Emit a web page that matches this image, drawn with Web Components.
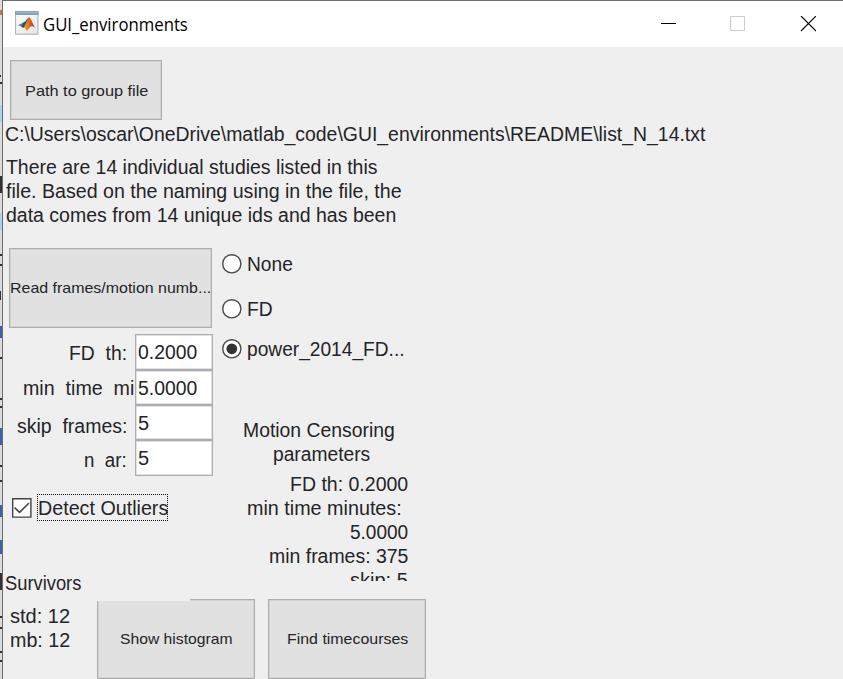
<!DOCTYPE html>
<html lang="en">
<head>
<meta charset="utf-8">
<title>GUI_environments</title>
<style>
html,body{margin:0;height:679px;overflow:hidden;background:#efefef}
</style>
</head>
<body>
<gui-window></gui-window>

<template id="window-template">
<style>
:host{display:flex;width:843px;height:679px;overflow:hidden;font:20px/24px "Liberation Sans",Arial,sans-serif;color:#242428}
.edge{flex:none;width:2px;height:679px}
.window{flex:none;box-sizing:border-box;width:841px;height:679px;border-left:1px solid #6b6b6b;border-top:1px solid #6b6b6b;background:#efefef;display:flex;flex-direction:column;align-items:flex-start}
.mid{display:flex;margin-top:21px;height:233px}
.left{width:210px}
.right{width:217px;padding-top:4px;box-sizing:border-box}
.low{display:flex;height:105px}
.lowleft{width:240px;height:105px}
.desc{height:72px;margin:9px 0 0 3px}
.end{display:flex;flex-direction:column;align-items:flex-end;width:165px}
.clip{height:109px;overflow:hidden}
.foot{display:flex}
.stats{width:94px;padding:5px 0 0 7px;box-sizing:border-box}
</style>
<svg class="edge" viewBox="0 0 2 679">
<path fill="#dcdcdc" d="M0 0h2v679H0z"/>
<path fill="#a8d5e8" d="M0 105h2v17H0zM0 213h2v17H0z"/>
<path fill="#333" d="M0 75h1v2H0zM0 82h2v2H0zM0 176h2v17H0zM0 254h2v2H0zM0 264h2v2H0zM0 291h1v9H0zM0 357h2v2H0zM0 398h2v2H0zM0 406h2v2H0zM0 465h2v2H0zM0 480h2v2H0zM0 573h2v17H0zM0 616h2v2H0zM0 627h2v2H0zM0 651h2v2H0zM0 660h2v2H0z"/>
<path fill="#3c62a8" d="M0 326h2v12H0zM0 428h2v17H0zM0 505h2v12H0zM0 540h2v14H0z"/>
<path fill="#bb795b" d="M0 10h2v5H0z"/>
</svg>
<div class="window">
<title-bar></title-bar>
<push-button style="width:152px;height:60px;margin:13px 0 0 7px;--dy:2px"><fit-text w="123">Path to group file</fit-text></push-button>
<fit-text w="700" style="margin:2px 0 0 2px">C:\Users\oscar\OneDrive\matlab_code\GUI_environments\README\list_N_14.txt</fit-text>
<div class="desc">
<fit-text w="371">There are 14 individual studies listed in this</fit-text>
<fit-text w="396">file. Based on the naming using in the file, the</fit-text>
<fit-text w="390">data comes from 14 unique ids and has been</fit-text>
</div>
<div class="mid">
<div class="left">
<push-button style="width:203px;height:80px;margin-left:6px"><fit-text w="201">Read frames/motion numb...</fit-text></push-button>
<edit-row style="margin-top:6px;--ly:7px;--vy:6px;--end:8px"><fit-text slot="label" w="58">FD  th:</fit-text><fit-text w="59">0.2000</fit-text></edit-row>
<edit-row style="--h:35px;--ly:6px;--vy:6px;--end:1px"><fit-text slot="label" w="111">min  time  mi</fit-text><fit-text w="59">5.0000</fit-text></edit-row>
<edit-row style="--h:35px;--ly:9px;--vy:6px;--end:8px"><fit-text slot="label" w="110">skip  frames:</fit-text><fit-text w="11">5</fit-text></edit-row>
<edit-row style="--ly:8px;--vy:6px;--end:8px"><fit-text slot="label" w="43">n  ar:</fit-text><fit-text w="11">5</fit-text></edit-row>
</div>
<div class="right">
<radio-item><fit-text w="46">None</fit-text></radio-item>
<radio-item style="margin-top:21px"><fit-text w="26">FD</fit-text></radio-item>
<radio-item checked style="margin-top:16px"><fit-text w="158">power_2014_FD...</fit-text></radio-item>
<div style="display:flex;flex-direction:column;align-items:center;width:150px;margin:57px 0 0 31px">
<fit-text w="152">Motion Censoring</fit-text><fit-text w="97" style="margin-left:5px">parameters</fit-text>
</div>
</div>
</div>
<div class="low" style="margin-top:-9px">
<div class="lowleft">
<check-item style="margin:22px 0 0 9px"><fit-text w="130">Detect Outliers</fit-text></check-item>
<fit-text w="76" style="margin:50px 0 0 2px">Survivors</fit-text>
</div>
<div class="end clip">
<fit-text w="118">FD th: 0.2000</fit-text>
<fit-text w="155" style="margin-right:6px">min time minutes:</fit-text>
<fit-text w="58">5.0000</fit-text>
<fit-text w="139">min frames: 375</fit-text>
<fit-text w="58">skip: 5</fit-text>
</div>
</div>
<div class="foot" style="margin-top:22px">
<div class="stats"><fit-text w="60">std: 12</fit-text><fit-text w="60">mb: 12</fit-text></div>
<push-button cut style="width:158px;height:80px"><fit-text w="113">Show histogram</fit-text></push-button>
<push-button style="width:158px;height:80px;margin-left:13px"><fit-text w="121">Find timecourses</fit-text></push-button>
</div>
</div>
</template>

<script>
function define(name, html, ready) {
  customElements.define(name, class extends HTMLElement {
    connectedCallback() {
      if (this.shadowRoot) return;
      this.attachShadow({ mode: "open" }).innerHTML = html;
      if (ready) ready(this);
    }
  });
}

// Text squeezed or stretched horizontally to a stated width.
define("fit-text", `<style>
:host{display:block;height:24px;white-space:pre;flex:none}
span{display:inline-block;white-space:pre;transform-origin:0 0}
</style><span><slot></slot></span>`, el => {
  const w = Number(el.getAttribute("w"));
  el.style.width = w + "px";
  const span = el.shadowRoot.querySelector("span");
  requestAnimationFrame(() => {
    span.style.transform = `scaleX(${w / span.offsetWidth})`;
  });
});

define("push-button", `<style>
:host{display:flex;box-sizing:border-box;align-items:center;justify-content:center;border:1px solid #adadad;box-shadow:inset 0 0 0 1px #d2d2d2;background:#e1e1e1;font-size:15px;line-height:24px;padding-top:var(--dy,0);position:relative;flex:none}
:host([cut]) i{position:absolute;left:-1px;top:-1px;width:93px;height:2px;background:#efefef}
</style><slot></slot><i></i>`);

define("edit-row", `<style>
:host{display:flex;height:var(--h,36px)}
.label{width:132px;box-sizing:border-box;display:flex;justify-content:flex-end;padding:var(--ly) var(--end) 0 0}
.box{width:78px;box-sizing:border-box;border:1px solid #abadb3;box-shadow:inset 0 0 0 .5px #c5c6cb;background:#fff;padding:calc(var(--vy) - 1px) 0 0 2px}
</style><div class="label"><slot name="label"></slot></div><div class="box"><slot></slot></div>`);

define("radio-item", `<style>
:host{display:flex;gap:5px;padding-left:9px;height:24px}
svg{width:20px;height:20px;margin-top:2px;flex:none}
.dot{display:none}
:host([checked]) .dot{display:block}
</style><svg viewBox="0 0 20 20"><circle cx="9.8" cy="9.8" r="9.1" fill="#fff" stroke="#4a4a4a" stroke-width="1.4"/><circle class="dot" cx="9.8" cy="9.8" r="5.4" fill="#333"/></svg><slot></slot>`);

define("check-item", `<style>
:host{display:flex;height:27px;align-items:flex-start}
svg{width:20px;height:20px;margin-top:4px;flex:none}
.focus{box-sizing:border-box;width:131px;height:27px;margin-left:5px;border:1px dotted #111;padding-top:1px}
</style><svg viewBox="0 0 20 20"><path d="M.7.7h18.2v18.4H.7z" fill="#fff" stroke="#444" stroke-width="1.4"/><path d="M2.6 9.6 7.6 14.4 17 5" fill="none" stroke="#444" stroke-width="1.5"/></svg><div class="focus"><slot></slot></div>`);

define("title-bar", `<style>
:host{display:flex;width:840px;height:46px;background:#fff;color:#000;font:18px/24px "Open Sans","Noto Sans",sans-serif;flex:none}
.logo{width:24px;height:24px;margin:10px 0 0 12px}
fit-text{margin:11px 0 0 4px}
.controls{width:156px;height:16px;margin:15px 0 0 472px}
</style>
<svg class="logo" viewBox="0 0 24 24">
<defs><linearGradient id="m" x1="0" x2="1"><stop offset="0" stop-color="#f6b13c"/><stop offset=".35" stop-color="#ef7d22"/><stop offset="1" stop-color="#a92a16"/></linearGradient>
<linearGradient id="f" x1="0" x2="1" y1="0" y2="1"><stop offset="0" stop-color="#fff"/><stop offset="1" stop-color="#e3e5e7"/></linearGradient></defs>
<path d="M.6.6h22.4v22.6H.6z" fill="url(#f)" stroke="#a9adb1"/>
<path d="M0 0h23.6v4H0z" fill="#7fa3bf"/><path d="M1 1h22v1H1z" fill="#9dbbd1"/>
<path d="M3 14.3 8.5 11.6 11.4 12.4 8.5 17 6.4 15.6z" fill="#3b83b5"/>
<path d="M8.5 11.6C11 10.8 12.2 7 14.2 6.3L12 13 8.5 17 6.4 15.6z" fill="#31506f"/>
<path d="M8.3 16.8C10.6 15.2 12.6 7.2 14.2 6.2 16 7 17.7 13.2 20.3 17 18 15.2 16.4 14.7 14.7 16.4L11.6 20C10.8 18.2 10.2 17 8.3 16.8z" fill="url(#m)"/>
</svg>
<fit-text w="145">GUI_environments</fit-text>
<svg class="controls" viewBox="0 0 156 16" fill="none"><path d="M1 7.5h15" stroke="#000"/><path d="M70.5.5h14v14h-14z" stroke="#ccc"/><path d="M141 0l15 15M156 0l-15 15" stroke="#000" stroke-width="1.1"/></svg>`);

customElements.define("gui-window", class extends HTMLElement {
  connectedCallback() {
    this.attachShadow({ mode: "open" }).append(document.getElementById("window-template").content.cloneNode(true));
  }
});
</script>
</body>
</html>
